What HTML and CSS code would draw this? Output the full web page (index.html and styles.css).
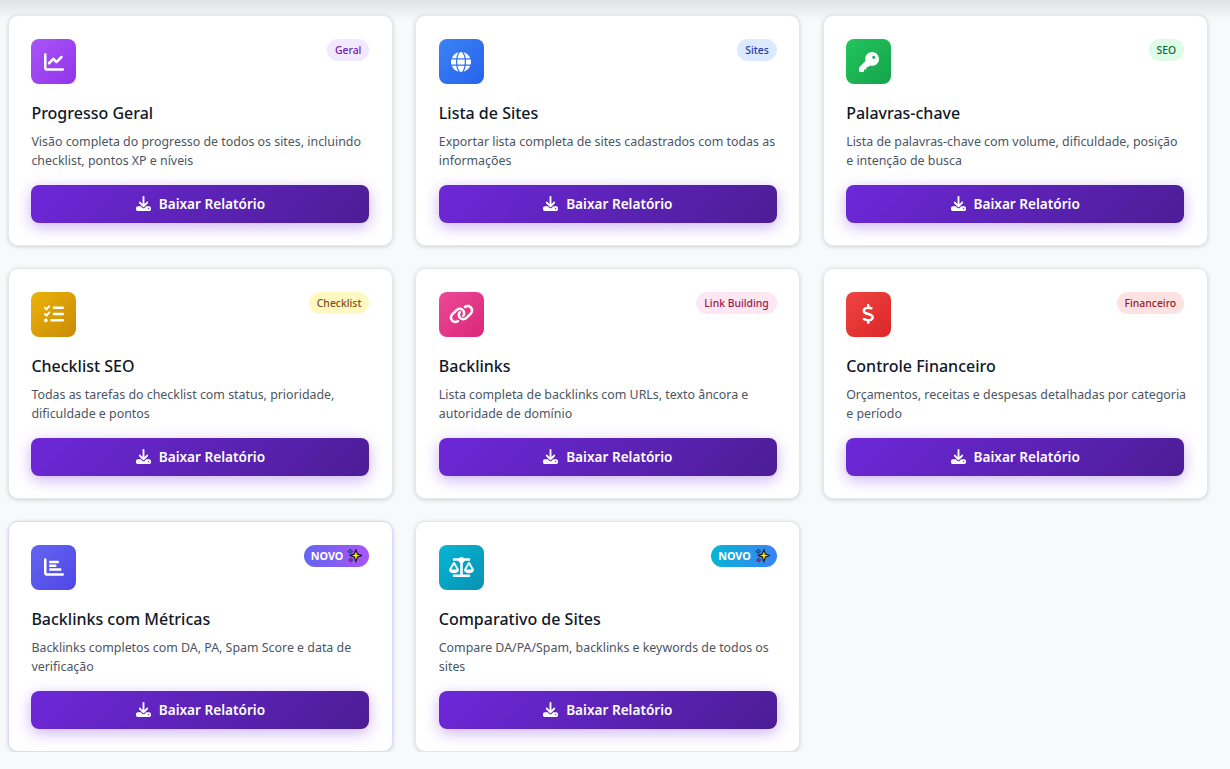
FILE: index.html
```html
<!DOCTYPE html>
<html lang="en">
<head>
    <meta charset="UTF-8">
    <meta name="viewport" content="width=device-width, initial-scale=1.0">
    <title>Relatórios</title>
    <link rel="stylesheet" href="styles.css">
</head>
<body>
    <svg class="sprite" aria-hidden="true">
        <symbol id="i-download" viewBox="0 0 512 512"><path d="M288 32c0-17.7-14.3-32-32-32s-32 14.3-32 32V274.7l-73.4-73.4c-12.5-12.5-32.8-12.5-45.3 0s-12.5 32.8 0 45.3l128 128c12.5 12.5 32.8 12.5 45.3 0l128-128c12.5-12.5 12.5-32.8 0-45.3s-32.8-12.5-45.3 0L288 274.7V32zM64 352c-35.3 0-64 28.7-64 64v32c0 35.3 28.7 64 64 64H448c35.3 0 64-28.7 64-64V416c0-35.3-28.7-64-64-64H346.5l-45.3 45.3c-25 25-65.5 25-90.5 0L165.5 352H64zm368 56a24 24 0 1 1 0 48 24 24 0 1 1 0-48z"/></symbol>
        <symbol id="i-sparkles" viewBox="0 0 16 16">
            <path d="M9.5 2l1.6 4.4 4.4 1.6-4.4 1.6-1.6 4.9-1.6-4.9L3.5 8l4.4-1.6z" fill="#ffe600" stroke="#111" stroke-width="1.1"/>
            <path d="M3.5 1l.9 1.9 1.9.9-1.9.9-.9 1.9-.9-1.9L.7 3.800l1.900-.9z" fill="#2f6fd8" stroke="#222" stroke-width=".7"/>
            <path d="M4 10.5l.8 1.5 1.5.8-1.5.8-.8 1.500-.8-1.500-1.500-.8 1.500-.8z" fill="#c026d3" stroke="#222" stroke-width=".7"/>
        </symbol>
    </svg>

    <div class="report-grid">

        <div class="card">
            <div class="card-top">
                <div class="card-icon purple">
                    <svg class="ico" viewBox="0 0 512 512"><path d="M64 64c0-17.7-14.3-32-32-32S0 46.3 0 64V400c0 44.2 35.8 80 80 80H480c17.7 0 32-14.3 32-32s-14.3-32-32-32H80c-8.8 0-16-7.2-16-16V64zm406.6 86.6c12.5-12.5 12.5-32.8 0-45.3s-32.8-12.5-45.3 0L320 210.7l-57.4-57.4c-12.5-12.5-32.8-12.5-45.3 0l-112 112c-12.5 12.5-12.5 32.8 0 45.3s32.8 12.5 45.3 0L240 221.3l57.4 57.4c12.5 12.5 32.8 12.5 45.3 0l128-128z"/></svg>
                </div>
                <span class="tag tag-purple">Geral</span>
            </div>
            <h3>Progresso Geral</h3>
            <p>Visão completa do progresso de todos os sites, incluindo checklist, pontos XP e níveis</p>
            <button class="download-btn"><svg class="btn-ico"><use href="#i-download"/></svg>Baixar Relatório</button>
        </div>

        <div class="card">
            <div class="card-top">
                <div class="card-icon blue">
                    <svg class="ico" viewBox="0 0 512 512"><path d="M352 256c0 22.2-1.2 43.6-3.3 64H163.3c-2.2-20.4-3.3-41.8-3.3-64s1.2-43.6 3.3-64H348.7c2.2 20.4 3.3 41.8 3.3 64zm28.8-64H503.9c5.3 20.5 8.1 41.9 8.1 64s-2.8 43.5-8.1 64H380.8c2.1-20.6 3.2-42 3.2-64s-1.1-43.4-3.2-64zm112.6-32H376.7c-10-63.9-29.8-117.4-55.3-151.6c78.3 20.7 142 77.5 171.9 151.6zm-149.1 0H167.7c6.1-36.4 15.5-68.6 27-94.7c10.5-23.6 22.2-40.7 33.5-51.5C239.4 3.2 248.7 0 256 0s16.6 3.2 27.8 13.8c11.3 10.8 23 27.9 33.5 51.5c11.6 26 20.9 58.2 27 94.7zm-209 0H18.6C48.6 85.9 112.2 29.1 190.6 8.4C165.1 42.6 145.3 96.1 135.3 160zM8.1 192H131.2c-2.1 20.6-3.2 42-3.2 64s1.1 43.4 3.2 64H8.1C2.8 299.5 0 278.1 0 256s2.8-43.5 8.1-64zM194.7 446.6c-11.6-26-20.9-58.2-27-94.6H344.3c-6.1 36.4-15.5 68.6-27 94.6c-10.5 23.6-22.2 40.7-33.5 51.5C272.6 508.8 263.3 512 256 512s-16.6-3.2-27.8-13.8c-11.3-10.8-23-27.9-33.5-51.5zM135.3 352c10 63.9 29.8 117.4 55.3 151.6C112.2 482.9 48.6 426.1 18.6 352H135.3zm358.1 0c-30 74.1-93.6 130.9-171.9 151.6c25.5-34.2 45.2-87.7 55.3-151.6H493.4z"/></svg>
                </div>
                <span class="tag tag-blue">Sites</span>
            </div>
            <h3>Lista de Sites</h3>
            <p>Exportar lista completa de sites cadastrados com todas as informações</p>
            <button class="download-btn"><svg class="btn-ico"><use href="#i-download"/></svg>Baixar Relatório</button>
        </div>

        <div class="card">
            <div class="card-top">
                <div class="card-icon green">
                    <svg class="ico" viewBox="0 0 512 512"><path d="M336 352c97.2 0 176-78.8 176-176S433.2 0 336 0S160 78.8 160 176c0 18.7 2.9 36.8 8.3 53.7L7 391c-4.5 4.5-7 10.6-7 17v80c0 13.3 10.7 24 24 24h80c13.3 0 24-10.7 24-24V448h40c13.3 0 24-10.7 24-24V384h40c6.4 0 12.5-2.5 17-7l33.3-33.3c16.9 5.4 35 8.3 53.7 8.3zM376 96a40 40 0 1 1 0 80 40 40 0 1 1 0-80z"/></svg>
                </div>
                <span class="tag tag-green">SEO</span>
            </div>
            <h3>Palavras-chave</h3>
            <p>Lista de palavras-chave com volume, dificuldade, posição e intenção de busca</p>
            <button class="download-btn"><svg class="btn-ico"><use href="#i-download"/></svg>Baixar Relatório</button>
        </div>

        <div class="card">
            <div class="card-top">
                <div class="card-icon yellow">
                    <svg class="ico" viewBox="0 0 512 512"><path d="M152.1 38.2c9.9 8.9 10.7 24 1.8 33.9l-72 80c-4.4 4.9-10.6 7.8-17.2 7.9s-12.9-2.4-17.6-7L7 113C-2.3 103.6-2.3 88.4 7 79s24.6-9.4 33.9 0l22.1 22.1 55.1-61.2c8.9-9.9 24-10.7 33.9-1.8zm0 160c9.9 8.9 10.7 24 1.8 33.9l-72 80c-4.4 4.9-10.6 7.8-17.2 7.9s-12.9-2.4-17.6-7L7 273c-9.4-9.4-9.4-24.6 0-33.9s24.6-9.4 33.9 0l22.1 22.1 55.1-61.2c8.9-9.9 24-10.7 33.9-1.8zM224 96c0-17.7 14.3-32 32-32H480c17.7 0 32 14.3 32 32s-14.3 32-32 32H256c-17.7 0-32-14.3-32-32zm0 160c0-17.7 14.3-32 32-32H480c17.7 0 32 14.3 32 32s-14.3 32-32 32H256c-17.7 0-32-14.3-32-32zM160 416c0-17.7 14.3-32 32-32H480c17.7 0 32 14.3 32 32s-14.3 32-32 32H192c-17.7 0-32-14.3-32-32zM48 368a48 48 0 1 1 0 96 48 48 0 1 1 0-96z"/></svg>
                </div>
                <span class="tag tag-yellow">Checklist</span>
            </div>
            <h3>Checklist SEO</h3>
            <p>Todas as tarefas do checklist com status, prioridade, dificuldade e pontos</p>
            <button class="download-btn"><svg class="btn-ico"><use href="#i-download"/></svg>Baixar Relatório</button>
        </div>

        <div class="card">
            <div class="card-top">
                <div class="card-icon pink">
                    <svg class="ico ico-wide" viewBox="0 0 640 512"><path d="M579.8 267.7c56.5-56.5 56.5-148 0-204.5c-50-50-128.8-56.5-186.3-15.4l-1.6 1.1c-14.4 10.3-17.7 30.3-7.4 44.6s30.3 17.7 44.6 7.4l1.6-1.1c32.1-22.9 76-19.3 103.8 8.6c31.5 31.5 31.5 82.5 0 114L422.3 334.8c-31.5 31.5-82.5 31.5-114 0c-27.9-27.9-31.5-71.8-8.6-103.8l1.1-1.6c10.3-14.4 6.9-34.4-7.4-44.6s-34.4-6.9-44.6 7.4l-1.1 1.6C206.5 251.2 213 330 263 380c56.5 56.5 148 56.5 204.5 0L579.8 267.7zM60.2 244.3c-56.5 56.5-56.5 148 0 204.5c50 50 128.8 56.5 186.3 15.4l1.6-1.1c14.4-10.3 17.7-30.3 7.4-44.6s-30.3-17.7-44.6-7.4l-1.6 1.1c-32.1 22.9-76 19.3-103.8-8.6C74 372 74 321 105.5 289.5L217.7 177.2c31.5-31.5 82.5-31.5 114 0c27.9 27.9 31.5 71.8 8.6 103.9l-1.1 1.6c-10.3 14.4-6.9 34.4 7.4 44.6s34.4 6.9 44.6-7.4l1.1-1.6C433.5 260.8 427 182 377 132c-56.5-56.5-148-56.5-204.5 0L60.2 244.3z"/></svg>
                </div>
                <span class="tag tag-pink">Link Building</span>
            </div>
            <h3>Backlinks</h3>
            <p>Lista completa de backlinks com URLs, texto âncora e autoridade de domínio</p>
            <button class="download-btn"><svg class="btn-ico"><use href="#i-download"/></svg>Baixar Relatório</button>
        </div>

        <div class="card">
            <div class="card-top">
                <div class="card-icon red">
                    <svg class="ico ico-narrow" viewBox="0 0 320 512"><path d="M160 0c17.7 0 32 14.3 32 32V67.7c1.6 .2 3.1 .4 4.7 .7c.4 .1 .7 .1 1.1 .2l48 8.8c17.4 3.2 28.9 19.9 25.7 37.2s-19.9 28.9-37.2 25.7l-47.5-8.7c-31.3-4.6-58.9-1.5-78.3 6.2s-27.2 18.3-29 28.1c-2 10.7-.5 16.7 1.2 20.4c1.8 3.9 5.5 8.3 12.8 13.2c16.3 10.7 41.3 17.7 73.7 26.3l2.9 .8c28.6 7.6 63.6 16.8 89.6 33.8c14.2 9.3 27.6 21.9 35.9 39.5c8.5 17.9 10.3 37.9 6.4 59.2c-6.9 38-33.1 63.4-65.6 76.7c-13.7 5.6-28.6 9.2-44.4 11V480c0 17.7-14.3 32-32 32s-32-14.3-32-32V445.1c-.4-.1-.9-.1-1.3-.2l-.2 0 0 0c-24.4-3.8-64.5-14.3-91.5-26.3c-16.1-7.2-23.4-26.1-16.2-42.2s26.1-23.4 42.2-16.2c20.9 9.3 55.3 18.5 75.2 21.6c31.9 4.7 58.2 2 76-5.3c16.9-6.9 24.6-16.9 26.8-28.9c1.9-10.6 .4-16.7-1.3-20.4c-1.9-4-5.6-8.4-13-13.3c-16.4-10.7-41.5-17.7-74-26.3l-2.8-.7 0 0C119.4 279.3 84.4 270 58.4 253c-14.2-9.3-27.5-22-35.8-39.6c-8.4-17.9-10.1-37.9-6.1-59.2C23.7 116 52.3 91.2 84.8 78.3c13.3-5.3 27.9-8.9 43.2-11V32c0-17.7 14.3-32 32-32z"/></svg>
                </div>
                <span class="tag tag-red">Financeiro</span>
            </div>
            <h3>Controle Financeiro</h3>
            <p>Orçamentos, receitas e despesas detalhadas por categoria e período</p>
            <button class="download-btn"><svg class="btn-ico"><use href="#i-download"/></svg>Baixar Relatório</button>
        </div>

        <div class="card card-new">
            <div class="card-top">
                <div class="card-icon indigo">
                    <svg class="ico" viewBox="0 0 512 512"><path d="M32 32c17.7 0 32 14.3 32 32V400c0 8.8 7.2 16 16 16H480c17.7 0 32 14.3 32 32s-14.3 32-32 32H80c-44.2 0-80-35.8-80-80V64C0 46.3 14.3 32 32 32zm96 96c0-17.7 14.3-32 32-32l192 0c17.7 0 32 14.3 32 32s-14.3 32-32 32l-192 0c-17.7 0-32-14.3-32-32zm32 64H288c17.7 0 32 14.3 32 32s-14.3 32-32 32H160c-17.7 0-32-14.3-32-32s14.3-32 32-32zm0 96H416c17.7 0 32 14.3 32 32s-14.3 32-32 32H160c-17.7 0-32-14.3-32-32s14.3-32 32-32z"/></svg>
                </div>
                <span class="tag tag-new-purple">NOVO <svg class="spark"><use href="#i-sparkles"/></svg></span>
            </div>
            <h3>Backlinks com Métricas</h3>
            <p>Backlinks completos com DA, PA, Spam Score e data de verificação</p>
            <button class="download-btn"><svg class="btn-ico"><use href="#i-download"/></svg>Baixar Relatório</button>
        </div>

        <div class="card">
            <div class="card-top">
                <div class="card-icon cyan">
                    <svg class="ico ico-wide" viewBox="0 0 640 512"><path d="M384 32H512c17.7 0 32 14.3 32 32s-14.3 32-32 32H398.4c-5.2 25.8-22.9 47.1-46.4 57.3V448H512c17.7 0 32 14.3 32 32s-14.3 32-32 32H320 128c-17.7 0-32-14.3-32-32s14.3-32 32-32H288V153.3c-23.5-10.3-41.2-31.6-46.4-57.3H128c-17.7 0-32-14.3-32-32s14.3-32 32-32H256c14.6-19.4 37.8-32 64-32s49.4 12.6 64 32zm55.6 288H584.4L512 195.8 439.6 320zM512 416c-62.9 0-115.2-34-126-78.9c-2.6-11 1-22.3 6.7-32.1l95.2-163.2c5-8.6 14.2-13.8 24.1-13.8s19.1 5.3 24.1 13.8l95.2 163.2c5.7 9.8 9.3 21.1 6.7 32.1C627.2 382 574.9 416 512 416zM126.8 195.8L54.4 320H199.3L126.8 195.8zM.9 337.1c-2.6-11 1-22.3 6.7-32.1l95.2-163.2c5-8.6 14.2-13.8 24.1-13.8s19.1 5.3 24.1 13.8l95.2 163.2c5.7 9.8 9.3 21.1 6.7 32.1C242 382 189.7 416 126.8 416S11.7 382 .9 337.1z"/></svg>
                </div>
                <span class="tag tag-new-cyan">NOVO <svg class="spark"><use href="#i-sparkles"/></svg></span>
            </div>
            <h3>Comparativo de Sites</h3>
            <p>Compare DA/PA/Spam, backlinks e keywords de todos os sites</p>
            <button class="download-btn"><svg class="btn-ico"><use href="#i-download"/></svg>Baixar Relatório</button>
        </div>

    </div>
</body>
</html>
```

FILE: styles.css
```css
/* Global Styles */
* {
    margin: 0;
    padding: 0;
    box-sizing: border-box;
    font-family: 'Noto Sans', 'Open Sans', sans-serif;
}

body {
    background: #f8f9fb linear-gradient(#e0e1e3, #f8f9fb) no-repeat top / 100% 20px;
    color: #111827;
    overflow: hidden;
}

.sprite {
    display: none;
}

/* Report Grid */
.report-grid {
    display: grid;
    grid-template-columns: repeat(3, 384.8px);
    gap: 22.4px 22.6px;
    margin: 15px 0 0 8px;
}

.card {
    display: flex;
    flex-direction: column;
    height: 230.6px;
    padding: 23px 22.4px 22px;
    background-color: #fff;
    border: 1px solid #e5e7eb;
    border-radius: 10px;
    box-shadow: 0 1px 4px rgba(0, 0, 0, 0.16);
}

.card-new {
    border-color: #ddd6fe;
}

.card-top {
    display: flex;
    justify-content: space-between;
    align-items: flex-start;
    margin-bottom: 16px;
}

.card-icon {
    display: flex;
    align-items: center;
    justify-content: center;
    width: 45px;
    height: 45px;
    border-radius: 8px;
}

.ico {
    width: 20px;
    height: 20px;
    fill: #fff;
}

.ico-wide {
    width: 25px;
}

.ico-narrow {
    width: 12.5px;
}

.purple { background: linear-gradient(135deg, #a855f7, #9333ea); }
.blue { background: linear-gradient(135deg, #3b82f6, #2563eb); }
.green { background: linear-gradient(135deg, #22c55e, #16a34a); }
.yellow { background: linear-gradient(135deg, #eab308, #ca8a04); }
.pink { background: linear-gradient(135deg, #ec4899, #db2777); }
.red { background: linear-gradient(135deg, #ef4444, #dc2626); }
.indigo { background: linear-gradient(135deg, #6366f1, #4f46e5); }
.cyan { background: linear-gradient(135deg, #06b6d4, #0891b2); }

/* Tags */
.tag {
    display: inline-flex;
    align-items: center;
    height: 22px;
    padding: 0 8px;
    border-radius: 20px;
    font-size: 10.4px;
    font-weight: 500;
}

.tag-purple { background-color: #f3e8ff; color: #6b21a8; }
.tag-blue { background-color: #dbeafe; color: #1e40af; }
.tag-green { background-color: #dcfce7; color: #166534; }
.tag-yellow { background-color: #fef9c3; color: #854d0e; }
.tag-pink { background-color: #fce7f3; color: #9d174d; }
.tag-red { background-color: #fee2e2; color: #991b1b; }

.tag-new-purple,
.tag-new-cyan {
    gap: 4px;
    padding: 0 7px;
    color: #fff;
    font-weight: 700;
    font-size: 10.8px;
}

.tag-new-purple { background: linear-gradient(90deg, #6366f1, #a855f7); }
.tag-new-cyan { background: linear-gradient(90deg, #06b6d4, #3b82f6); }

.spark {
    width: 15px;
    height: 15px;
}

/* Card Text */
.card h3 {
    font-size: 16px;
    font-weight: 500;
    line-height: 26px;
    color: #111827;
    margin-bottom: 7px;
}

.card p {
    margin-right: -3.5px;
    font-size: 12.4px;
    line-height: 18.7px;
    color: #4b5563;
}

/* Button */
.download-btn {
    display: flex;
    align-items: center;
    justify-content: center;
    gap: 8px;
    height: 37.5px;
    margin-top: auto;
    border: none;
    border-radius: 8px;
    background: linear-gradient(135deg, #6d28d9, #4c1d95);
    color: #fff;
    font-size: 13.6px;
    font-weight: 600;
    box-shadow: 0 4px 15px rgba(109, 40, 217, 0.35);
    cursor: pointer;
}

.btn-ico {
    width: 15px;
    height: 15px;
    fill: #fff;
}
```
